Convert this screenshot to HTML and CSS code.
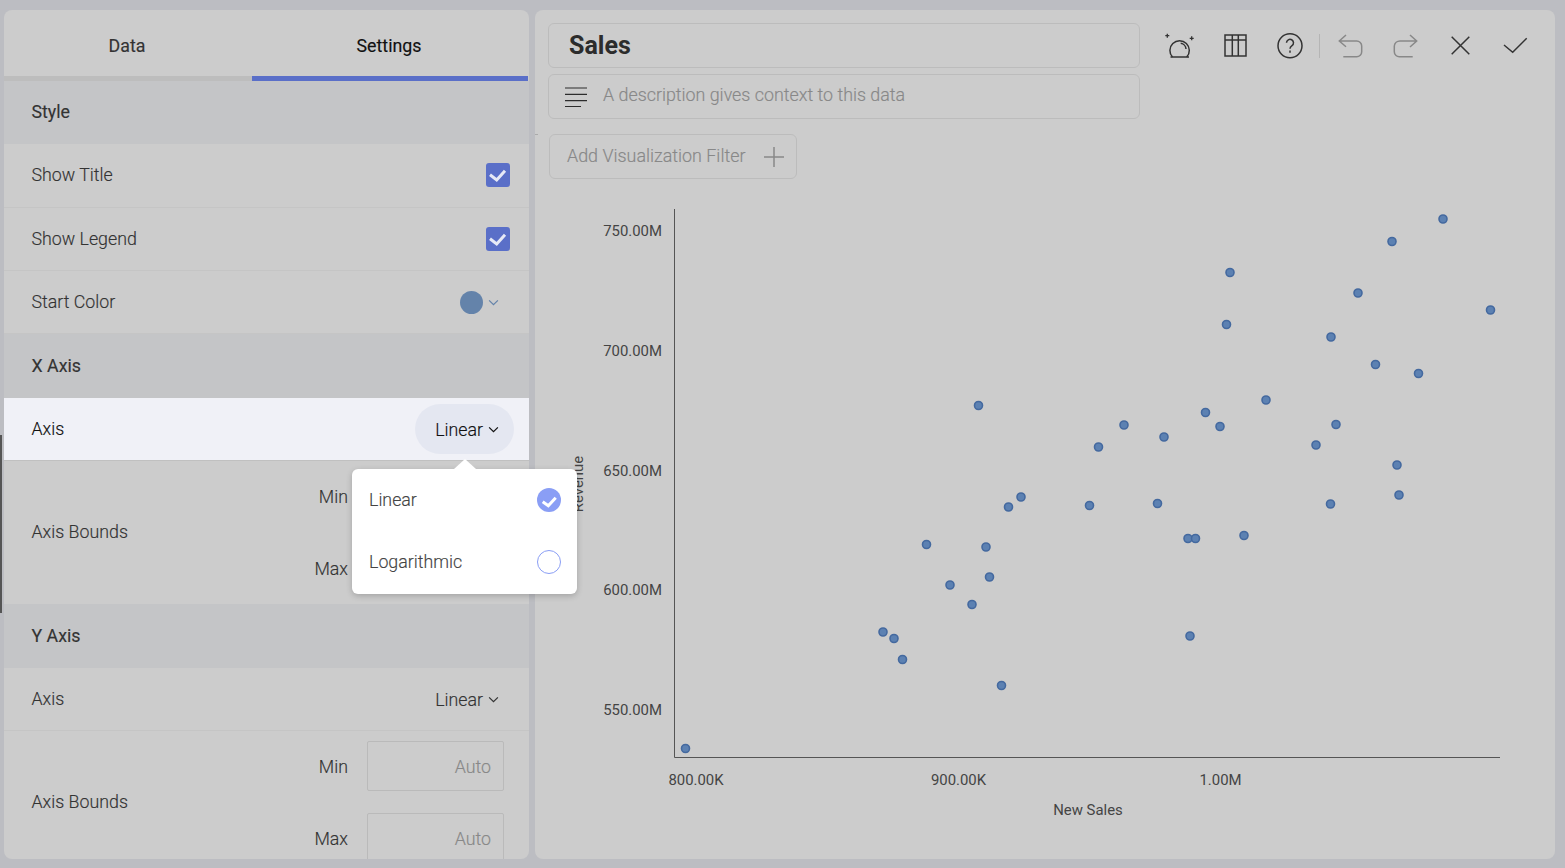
FILE: index.html
```html
<!DOCTYPE html>
<html lang="en">
<head>
<meta charset="utf-8">
<title>Sales</title>
<link rel="stylesheet" href="styles.css">
</head>
<body>
<div class="scroll-thumb"></div>
<div class="edge-tick"></div>
<aside class="side">
  <nav class="tabs">
    <div class="tab tab-data">Data</div>
    <div class="tab tab-settings">Settings</div>
  </nav>
  <div class="section section-first">Style</div>
  <div class="row row-tall"><span>Show Title</span><span class="check"><svg viewBox="0 0 24 24" class="check-icon"><path d="M4 11.700l6.700 5.300L19 7.700"/></svg></span></div>
  <div class="row"><span>Show Legend</span><span class="check"><svg viewBox="0 0 24 24" class="check-icon"><path d="M4 11.700l6.700 5.300L19 7.700"/></svg></span></div>
  <div class="row"><span>Start Color</span><span class="color-pick"><span class="swatch"></span><svg viewBox="0 0 12 8" class="chev chev-blue"><path d="M1 1.500l5 5 5-5"/></svg></span></div>
  <div class="section">X Axis</div>
  <div class="row row-active"><span>Axis</span><span class="pill">Linear<svg viewBox="0 0 12 8" class="chev chev-dark"><path d="M1 1.500l5 5 5-5"/></svg></span></div>
  <div class="bounds">
    <span class="bounds-label">Axis Bounds</span>
    <div class="fields">
      <div class="field"><span class="field-label">Min</span><span class="input"></span></div>
      <div class="field"><span class="field-label">Max</span><span class="input"></span></div>
    </div>
  </div>
  <div class="section">Y Axis</div>
  <div class="row"><span>Axis</span><span class="select">Linear<svg viewBox="0 0 12 8" class="chev chev-dark"><path d="M1 1.500l5 5 5-5"/></svg></span></div>
  <div class="bounds bounds-last">
    <span class="bounds-label">Axis Bounds</span>
    <div class="fields">
      <div class="field"><span class="field-label">Min</span><span class="input">Auto</span></div>
      <div class="field"><span class="field-label">Max</span><span class="input">Auto</span></div>
    </div>
  </div>
</aside>
<main class="main">
  <header class="head">
    <div class="head-fields">
      <div class="title-box">Sales</div>
      <div class="desc-box">
        <svg viewBox="0 0 22 20" class="lines"><path d="M0 1h22M0 7.300h22M0 13.600h22M0 19.500h16"/></svg>
        <span class="desc-text">A description gives context to this data</span>
      </div>
    </div>
    <div class="tools">
      <svg viewBox="0 0 32 32" class="tool"><path d="M8.500 27A9.700 9.700 0 1 1 22.700 27"/><path d="M6.500 27H25M16.700 13.300a6 6 0 0 1 5.300 5.700"/><path class="thin" d="M1.300 5.700h4M3.300 3.700v4M25.700 8.300h4M27.700 6.300v4"/></svg>
      <svg viewBox="0 0 32 32" class="tool"><path d="M6 5h21v21H6zM6 10h21M13.300 5v21M19.300 5v21"/></svg>
      <svg viewBox="0 0 32 32" class="tool"><circle cx="16" cy="15.700" r="12"/><path d="M12.500 12.700a3.500 3.500 0 1 1 5.500 3c-1.300.9-2 1.500-2 3M16 20.500v2.200"/></svg>
      <span class="tool-sep"></span>
      <svg viewBox="0 0 32 32" class="tool tool-off"><path d="M12 5l-6.700 6L12 16.700M5.300 11h17.400a5 5 0 0 1 5 5v5.700a5 5 0 0 1-5 5H9.300"/></svg>
      <svg viewBox="0 0 32 32" class="tool tool-off"><path d="M21 5l6.700 6L21 17M27.700 11H11a5.700 5.700 0 0 0-5.700 5v5.700a5 5 0 0 0 5.700 5h12.700"/></svg>
      <svg viewBox="0 0 32 32" class="tool"><path d="M7.700 6.700l17.600 17.600M25.300 6.700L7.700 24.300"/></svg>
      <svg viewBox="0 0 32 32" class="tool"><path d="M5 15l8.700 7.300L27.700 8.300"/></svg>
    </div>
  </header>
  <div class="filter-bar">
    <div class="filter"><span class="filter-text">Add Visualization Filter</span><svg viewBox="0 0 20 20" class="plus"><path d="M10 0v20M0 10h20"/></svg></div>
  </div>
  <div class="chart">
    <svg viewBox="535 190 1020 669" class="plot">
      <path class="axis" d="M674.500 209V757.500H1500"/>
      <g class="tick tick-y">
        <text x="662" y="236">750.00M</text>
        <text x="662" y="356">700.00M</text>
        <text x="662" y="476">650.00M</text>
        <text x="662" y="595">600.00M</text>
        <text x="662" y="715">550.00M</text>
      </g>
      <g class="tick tick-x">
        <text x="696" y="785">800.00K</text>
        <text x="958.500" y="785">900.00K</text>
        <text x="1220.500" y="785">1.00M</text>
        <text x="1088" y="815">New Sales</text>
        <text transform="translate(583 484) rotate(-90)">Revenue</text>
      </g>
      <g class="dots">
        <circle cx="685.500" cy="748.500" r="4"/><circle cx="883" cy="632" r="4"/><circle cx="894" cy="638.500" r="4"/>
        <circle cx="902.500" cy="659.500" r="4"/><circle cx="926.500" cy="544.500" r="4"/><circle cx="950" cy="585" r="4"/>
        <circle cx="972" cy="604.500" r="4"/><circle cx="978.500" cy="405.500" r="4"/><circle cx="986" cy="547" r="4"/>
        <circle cx="989.500" cy="577" r="4"/><circle cx="1001.500" cy="685.500" r="4"/><circle cx="1008.500" cy="507" r="4"/>
        <circle cx="1021" cy="497" r="4"/><circle cx="1089.500" cy="505.500" r="4"/><circle cx="1098.500" cy="447" r="4"/>
        <circle cx="1124" cy="425" r="4"/><circle cx="1157.500" cy="503.500" r="4"/><circle cx="1164" cy="437" r="4"/>
        <circle cx="1188" cy="538.500" r="4"/><circle cx="1195.500" cy="538.500" r="4"/><circle cx="1190" cy="636" r="4"/>
        <circle cx="1205.500" cy="412.500" r="4"/><circle cx="1220" cy="426.500" r="4"/><circle cx="1226.500" cy="324.500" r="4"/>
        <circle cx="1230" cy="272.500" r="4"/><circle cx="1244" cy="535.500" r="4"/><circle cx="1266" cy="400" r="4"/>
        <circle cx="1316" cy="445" r="4"/><circle cx="1331" cy="337" r="4"/><circle cx="1330.500" cy="504" r="4"/>
        <circle cx="1336" cy="424.500" r="4"/><circle cx="1358" cy="293" r="4"/><circle cx="1375.500" cy="364.500" r="4"/>
        <circle cx="1392" cy="241.500" r="4"/><circle cx="1397" cy="465" r="4"/><circle cx="1399" cy="495" r="4"/>
        <circle cx="1418.500" cy="373.500" r="4"/><circle cx="1443" cy="219" r="4"/><circle cx="1490.500" cy="310" r="4"/>
      </g>
    </svg>
  </div>
</main>
<div class="menu">
  <div class="menu-item"><span class="menu-text">Linear</span><span class="radio radio-on"><svg viewBox="0 0 24 24" class="check-icon"><path d="M5.700 13.700l5.600 4 7.400-8"/></svg></span></div>
  <div class="menu-item"><span class="menu-text">Logarithmic</span><span class="radio"></span></div>
</div>
</body>
</html>
```
FILE: styles.css
```css
* { box-sizing: border-box; }
html, body { margin: 0; height: 100%; }
body {
  display: flex;
  gap: 6px;
  height: 868px;
  padding: 10px 10px 9px 4px;
  overflow: hidden;
  background: #bcbdc2;
  font-family: Roboto, "Liberation Sans", sans-serif;
  font-size: 17.800px;
  font-weight: 300;
  color: #333;
  -webkit-text-stroke: 0.15px currentColor;
}
.scroll-thumb {
  position: absolute;
  left: 0;
  top: 435px;
  width: 2px;
  height: 178px;
  background: #555;
}
.edge-tick {
  position: absolute;
  left: 535px;
  top: 134px;
  width: 3px;
  height: 1px;
  background: #aaa;
  z-index: 1;
}
.side {
  flex: 0 0 525px;
  height: 849px;
  overflow: hidden;
  background: #ccc;
  border-radius: 8px;
}
.tabs { display: flex; height: 71px; }
.tab {
  display: flex;
  align-items: center;
  justify-content: center;
  padding: 4px 2px 0 0;
  height: 71px;
  font-weight: 400;
  border-bottom: 5px solid #bdbdbd;
}
.tab-data { flex: 0 0 248px; }
.tab-settings {
  flex: 0 0 276px;
  color: #111;
  border-bottom-color: #5a6fc8;
}
.section {
  display: flex;
  align-items: center;
  height: 64px;
  padding: 0 0 2px 27.500px;
  background: #c4c5c7;
  font-weight: 400;
}
.section-first { height: 63px; }
.row {
  display: flex;
  align-items: center;
  justify-content: space-between;
  height: 63px;
  padding: 0 19px 2px 27.500px;
  border-bottom: 1px solid #c5c5c5;
}
.row-tall { height: 64px; }
.row-active {
  padding-right: 15px;
  background: #f0f1f7;
  color: #111;
  border-bottom: 1px solid #c0c0c0;
}
.check {
  display: flex;
  width: 24px;
  height: 24px;
  margin-top: 1px;
  background: #5a6fc8;
  border-radius: 3px;
}
.check-icon {
  width: 100%;
  height: 100%;
  fill: none;
  stroke: #e6e9f6;
  stroke-width: 3;
}
.color-pick { display: flex; align-items: center; gap: 5px; margin: 2px 11px 0 0; }
.swatch { width: 23px; height: 23px; border-radius: 50%; background: #6483aa; }
.chev { flex: none; width: 11px; height: 7px; fill: none; stroke-width: 1.400; }
.chev-blue { stroke: #6483aa; }
.chev-dark { stroke: currentColor; margin-left: 5px; }
.pill {
  display: flex;
  align-items: center;
  height: 50px;
  margin-top: 2px;
  padding: 0 15px 0 20px;
  border-radius: 25px;
  background: #e4e7f1;
  color: #111;
}
.select { display: flex; align-items: center; margin-right: 11px; padding-top: 2px; }
.bounds {
  display: flex;
  align-items: center;
  justify-content: space-between;
  height: 143px;
  padding: 0 25px 0 27.500px;
}
.bounds-last { padding-bottom: 1px; }
.bounds-label { padding-bottom: 3px; }
.bounds-last .bounds-label { padding-bottom: 1px; }
.fields { display: flex; flex-direction: column; gap: 22px; }
.field { display: flex; align-items: center; gap: 19px; }
.field-label { width: 40px; text-align: right; }
.input {
  display: flex;
  align-items: center;
  justify-content: flex-end;
  width: 137px;
  height: 50px;
  padding: 0 12px 0 0;
  border: 1px solid #bababa;
  border-radius: 2px;
  color: #888;
}
.main {
  flex: 0 0 1020px;
  display: flex;
  flex-direction: column;
  height: 849px;
  background: #ccc;
  border-radius: 8px;
  overflow: hidden;
}
.head { display: flex; padding: 13px 0 0 13px; }
.head-fields { display: flex; flex-direction: column; gap: 6px; width: 592px; }
.title-box {
  display: flex;
  align-items: center;
  height: 45px;
  padding-left: 20px;
  border: 1px solid #bcbcbc;
  border-radius: 6px;
  font-size: 25px;
  font-weight: 700;
  color: #2c2c2c;
  -webkit-text-stroke: 0;
}
.desc-box {
  display: flex;
  align-items: center;
  gap: 16px;
  height: 45px;
  padding-left: 16px;
  border: 1px solid #bcbcbc;
  border-radius: 6px;
  color: #888;
}
.desc-text { padding-bottom: 5px; font-size: 17.850px; }
.lines { flex: none; width: 22px; height: 20px; fill: none; stroke: #2c2c2c; stroke-width: 1.200; }
.tools { display: flex; align-items: flex-start; gap: 23px; margin: 7px 0 0 24px; }
.tool {
  flex: none;
  width: 32px;
  height: 32px;
  fill: none;
  stroke: #333;
  stroke-width: 1.500;
}
.tool .thin { stroke-width: 1.300; }
.tool-off { stroke: #888; }
.tool-sep { flex: none; width: 1px; height: 24px; margin: 4px -8.500px 0 -10.500px; background: #b5b5b5; }
.filter-bar { padding: 15px 0 0 14px; }
.filter {
  display: flex;
  align-items: center;
  justify-content: space-between;
  width: 248px;
  height: 45px;
  padding: 0 12px 0 17px;
  border: 1px solid #bcbcbc;
  border-radius: 6px;
  color: #888;
}
.filter-text { padding-bottom: 2px; font-size: 17.900px; }
.plus { flex: none; width: 20px; height: 20px; fill: none; stroke: #888; stroke-width: 1.500; }
.chart { flex: 1; margin-top: 11px; min-height: 0; }
.plot { display: block; width: 1020px; height: 669px; overflow: visible; }
.axis { fill: none; stroke: #555; stroke-width: 1; }
.tick text { font-size: 14.900px; fill: #444; stroke: none; -webkit-text-stroke: 0; font-weight: 400; }
.tick-y text { text-anchor: end; }
.tick-x text { text-anchor: middle; }
.dots circle { fill: #5c81b2; stroke: #44699f; stroke-width: 1.600; }
.menu {
  position: absolute;
  left: 352px;
  top: 469px;
  width: 225px;
  height: 125px;
  padding: 0 16px 0 17px;
  background: #fff;
  border-radius: 6px;
  box-shadow: 0 2px 6px rgba(0, 0, 0, 0.2);
}
.menu::before {
  content: "";
  position: absolute;
  left: 102px;
  top: -10px;
  border: 11px solid transparent;
  border-top: 0;
  border-bottom: 10px solid #fff;
}
.menu-item {
  display: flex;
  align-items: center;
  justify-content: space-between;
  height: 62px;
  color: #444;
}
.menu-text { padding-bottom: 2px; }
.radio {
  flex: none;
  width: 24px;
  height: 24px;
  border: 1px solid #8a9ef5;
  border-radius: 50%;
}
.radio-on { display: flex; background: #8a9ef5; border: 0; }
.radio-on .check-icon { stroke: #fff; }
```
